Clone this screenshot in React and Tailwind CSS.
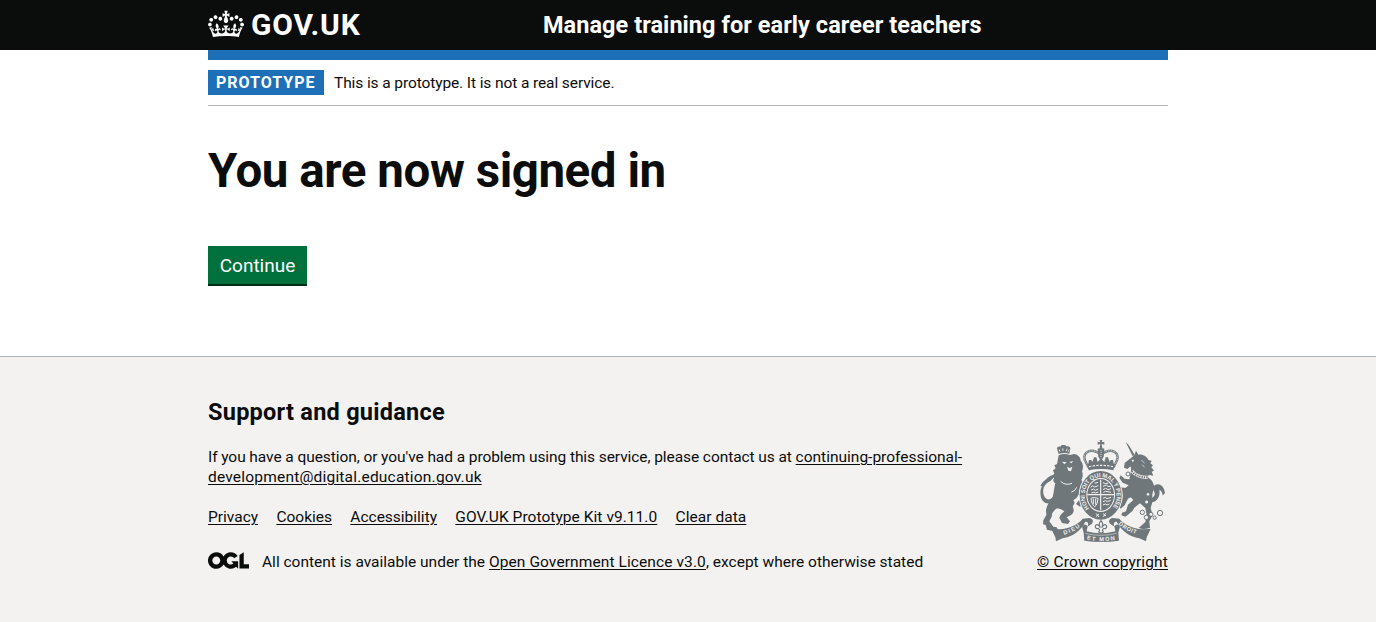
const GREY = "#6f777b";
const PAPER = "#f3f2f1";

function Crown() {
  return (
    <svg className="mb-0.5 h-[30px] w-9 shrink-0 fill-white" viewBox="0 0 132 97" aria-hidden="true">
      <path
        fillRule="evenodd"
        d="M25 30.2c3.5 1.5 7.7-.2 9.1-3.7 1.5-3.6-.2-7.8-3.9-9.2-3.6-1.4-7.6.3-9.1 3.9-1.4 3.5.3 7.5 3.9 9zM9 39.5c3.6 1.5 7.8-.2 9.2-3.7 1.5-3.6-.2-7.8-3.9-9.1-3.6-1.5-7.6.2-9.1 3.8-1.4 3.5.3 7.5 3.8 9zM4.4 57.2c3.5 1.5 7.7-.2 9.1-3.8 1.5-3.6-.2-7.7-3.9-9.1-3.5-1.5-7.6.3-9.1 3.8-1.4 3.5.3 7.6 3.9 9.1zm38.3-21.4c3.5 1.5 7.7-.2 9.1-3.8 1.5-3.6-.2-7.7-3.9-9.1-3.6-1.5-7.6.3-9.1 3.8-1.3 3.6.4 7.7 3.9 9.1zm64.4-5.6c-3.6 1.5-7.8-.2-9.1-3.7-1.5-3.6.2-7.8 3.8-9.2 3.6-1.4 7.7.3 9.2 3.9 1.3 3.5-.4 7.5-3.9 9zm15.9 9.3c-3.6 1.5-7.7-.2-9.1-3.7-1.5-3.6.2-7.8 3.7-9.1 3.6-1.5 7.7.2 9.2 3.8 1.5 3.5-.3 7.5-3.8 9zm4.7 17.7c-3.6 1.5-7.8-.2-9.2-3.8-1.5-3.6.2-7.7 3.9-9.1 3.6-1.5 7.7.3 9.2 3.8 1.3 3.5-.4 7.6-3.9 9.1zM89.3 35.8c-3.6 1.5-7.8-.2-9.2-3.8-1.4-3.6.2-7.7 3.9-9.1 3.6-1.5 7.7.3 9.2 3.8 1.4 3.6-.3 7.7-3.9 9.1zM69.7 17.7l8.9 4.7V9.3l-8.9 2.8c-.2-.3-.5-.6-.9-.9L72.4 0H59.6l3.5 11.2c-.3.3-.6.5-.9.9l-8.8-2.8v13.1l8.8-4.7c.3.3.6.7.9.9l-5 15.4v.1c-.2.8-.4 1.6-.4 2.4 0 4.1 3.1 7.5 7 8.1h.2c.3 0 .7.1 1 .1.4 0 .7 0 1-.1h.2c4-.6 7.1-4.1 7.1-8.1 0-.8-.1-1.7-.4-2.4V34l-5.1-15.4c.4-.2.7-.6 1-.9zM66 92.8c16.9 0 32.8 1.1 47.1 3.2 4-16.9 8.9-26.7 14-33.5l-9.6-3.4c1 4.9 1.1 7.2 0 10.2-1.5-1.4-3-4.3-4.2-8.7L108.6 76c2.8-2 5-3.2 7.5-3.3-4.4 9.4-10 11.9-13.6 11.2-4.3-.8-6.3-4.6-5.6-7.9 1-4.7 5.7-5.9 8-.5 4.3-8.7-3-11.4-7.6-8.8 7.1-7.2 7.9-13.5 2.1-21.1-8 6.1-8.1 12.3-4.5 20.8-4.7-5.4-12.1-2.5-9.5 6.2 3.4-5.2 7.9-2 7.2 3.1-.6 4.3-6.4 7.8-13.5 7.2-10.3-.9-10.9-8-11.2-13.8 2.5-.5 7.1 1.8 11 7.3L80.2 60c-4.1 4.4-8 5.3-12.3 5.4 1.4-4.4 8-11.6 8-11.6H55.5s6.4 7.2 7.9 11.6c-4.2-.1-8-1-12.3-5.4l1.4 16.4c3.9-5.5 8.5-7.7 10.9-7.3-.3 5.8-.9 12.8-11.1 13.8-7.2.6-12.9-2.9-13.5-7.2-.7-5 3.8-8.3 7.1-3.1 2.7-8.7-4.6-11.6-9.4-6.2 3.7-8.5 3.6-14.7-4.6-20.8-5.8 7.6-5 13.9 2.2 21.1-4.7-2.6-11.9.1-7.7 8.8 2.3-5.5 7.1-4.2 8.1.5.7 3.3-1.3 7.1-5.7 7.9-3.5.7-9-1.8-13.5-11.2 2.5.1 4.7 1.3 7.5 3.3l-4.7-15.4c-1.2 4.4-2.7 7.2-4.3 8.7-1.1-3-.9-5.3 0-10.2l-9.5 3.4c5 6.9 9.9 16.7 14 33.5 14.8-2.1 30.8-3.2 47.7-3.2z"
      />
    </svg>
  );
}

function OglLogo() {
  return (
    <svg className="mb-[3px] h-[17px] w-[41px] shrink-0 fill-[#0b0c0c]" viewBox="0 0 483.2 195.7" aria-hidden="true">
      <path d="M421.5 142.8V.1l-50.7 32.3v161.1h112.4v-50.7zm-122.3-9.6A47.12 47.12 0 0 1 221 97.8c0-26 21.1-47.1 47.1-47.1 16.7 0 31.4 8.7 39.7 21.8l42.7-27.2A97.63 97.63 0 0 0 268.1 0c-36.5 0-68.3 20.1-85.1 49.7A98 98 0 0 0 97.8 0C43.9 0 0 43.9 0 97.8s43.9 97.8 97.8 97.8c36.5 0 68.3-20.1 85.1-49.7a97.76 97.76 0 0 0 149.6 25.4l19.4 22.2h3v-87.8h-80l24.3 27.5zM97.8 145c-26 0-47.1-21.1-47.1-47.1s21.1-47.1 47.1-47.1 47.1 21.1 47.1 47.1S123.8 145 97.8 145" />
    </svg>
  );
}

function RoyalArms() {
  return (
    <svg className="h-[102px] w-[125px]" viewBox="30 24 375 306" fill={GREY} aria-hidden="true">
      <defs>
        <path id="garter" d="M178 229 A48 55 0 1 1 246 229" />
        <path id="dieu" d="M102 308 Q136 299 160 277" />
        <path id="etmon" d="M170 322 Q213 333 259 322" />
        <path id="droit" d="M265 277 Q290 299 326 308" />
      </defs>

      {/* lion */}
      <path d="M31 163c3-9 9-15 16-20 7-8 20-16 34-17-8 4-9 9-12 13-4 7-13 11-20 16-8 7-11 18-9 29 2 12 10 20 19 18 11-3 15-16 22-24l5 7c-6 13-14 26-27 29-14 2-25-8-27-23-2-12 0-21 4-29z" />
      <path d="M86 66l-5-16c0-6 6-8 10-6l4-5h10l4 4c6-2 13 1 12 8l-3 14q-16-5-32 1z" />
      <path d="M87 52l3 7m8-10l1 8m12-7l-2 8m8-5l-2 6" stroke={PAPER} strokeWidth="2.5" fill="none" />
      <path d="M86 70q16-7 34-1l12-3c12 2 20 10 20 20 8 8 9 22 4 32 4 10 2 20-2 26l10 14-3 16-10 14-7 2c-2 8-8 12-14 14l4 8-6 12c6 10 3 20-6 26l-12 6 10 12-6 8-18-3-8-16 4-9 11-10c-8-6-16-10-25-8-8 8-14 14-12 22l-8 16 12 16 10 2 4 8-16 3-17-4-4-14-8-2 1-12 9-16-1-14c2-16 12-28 20-40 4-14 4-28 8-42-6-2-8-8-4-14l-6-6 7-8-4-10 8-6-4-9 8-4z" />
      <path d="M138 172l18-6 14 8-4 14-18 4zM138 216l20-26 14 6-8 16-14 12z" />
      <path d="M96 89l14 2-7 6zM118 90l12-3-6 7zM111 104l8 4 8-4-4 14-8-2z" fill={PAPER} />
      <path d="M92 148q14 14 34 6m-2 26q12-2 16-14" fill="none" stroke={PAPER} strokeWidth="3" />

      {/* unicorn */}
      <path d="M287 30l7 7 4 5 16 27-6 4z" />
      <path d="M306 76l7-6 5-14 7 12c14-2 26 6 30 16l10 2-4 8 8 6-5 6 8 10-7 3 5 12-12-2-10 6-44-20-2-12-10 8-10-4 2-14 10-8z" />
      <path d="M306 84l6 1-4 4zM334 84l10 10m-8 4l8 8" fill={PAPER} stroke={PAPER} strokeWidth="2" />
      <path d="M304 112l48 22 12 10c10 14 10 24 4 38-2 12-2 18 0 26l-6 20 6 22-10 18 2 20-20 4-14-4 20-18 4-20-4-22-16-14c-10 8-18 12-22 22l-14 12-8 6-12-4 2-8 12-4 6-20 16-14-8-8-8 4-10 20-12 10-6-8 10-18 2-14-10-14-10-4 2-10 12 4 14 2 10-8-18-8-10-14 4-8 12 10 14 2z" />
      <path d="M361 200c12-4 16-12 11-22-6-12 0-21 12-21 9 0 18 8 21 26l-7 8c0-9-4-15-10-18 3 16-3 34-22 38z" />
      <path d="M305 117q18 20 48 19" fill="none" stroke={PAPER} strokeWidth="10" />
      <path d="M305 117q18 20 48 19" fill="none" stroke={GREY} strokeWidth="6" strokeDasharray="4 3" />
      <g fill={PAPER} stroke={GREY} strokeWidth="3">
        <circle cx="294" cy="126" r="6" />
        <circle cx="354" cy="187" r="5.5" />
        <circle cx="350" cy="210" r="6" />
        <circle cx="337" cy="241" r="6.5" />
        <circle cx="349" cy="256" r="6.5" />
        <circle cx="363" cy="247" r="6" />
        <circle cx="374" cy="257" r="5" />
        <circle cx="390" cy="243" r="8" />
      </g>

      {/* crown */}
      <path d="M209 24h8l-2 7 8-2v9l-8-2 2 12h-8l2-12-8 2v-9l8 2z" />
      <path
        d="M174 104c-2-10-12-16-11-29 1-15 16-21 29-18 10 2 15 6 21 13 6-7 11-11 21-13 13-3 28 3 29 18 1 13-9 19-11 29z"
        fill="none"
        stroke={GREY}
        strokeWidth="7"
      />
      <path
        d="M174 104c-2-10-12-16-11-29 1-15 16-21 29-18 10 2 15 6 21 13 6-7 11-11 21-13 13-3 28 3 29 18 1 13-9 19-11 29z"
        fill="none"
        stroke={PAPER}
        strokeWidth="2.5"
        strokeDasharray="2.5 2.5"
      />
      <path d="M203 50l10-3 10 3-2 24-8 14-8-14z" />
      <path d="M213 54v26" stroke={PAPER} strokeWidth="2.5" strokeDasharray="3 3" />
      <path d="M175 94l2-10h7l3 6 5-14h7l4 14 5-5 5-8 5 8 5 5 4-14h7l5 14 3-6h7l2 10v8h-76z" />
      <path d="M171 97q42-9 84 0l-5 18q-37-8-74 0z" />
      <path d="M177 104q36-8 72 0" fill="none" stroke={PAPER} strokeWidth="3.5" strokeDasharray="7 4" />

      {/* garter and shield */}
      <ellipse cx="212" cy="190" rx="66" ry="76" fill={PAPER} />
      <ellipse cx="212" cy="190" rx="63" ry="73" />
      <ellipse cx="212" cy="189" rx="43" ry="51" fill={PAPER} />
      <ellipse cx="212" cy="189" rx="40" ry="48" />
      <path d="M212 143v92M172 188h80" stroke={PAPER} strokeWidth="3.5" />
      <g fill="none" stroke={PAPER} strokeWidth="3">
        <path d="M182 166l6-5 5 4 12-4m-22 13l8-3 5 4 9-4m-21 12l8-3 4 3 9-3M194 154l10-3" />
        <path d="M219 152l8 3 8-2m-16 10l10-4 5 4 8 1m-23 9l8-4 7 4 9-3m-23 11l7-3 16 3" />
        <path d="M183 199c7-4 13-2 21 0-1 12-3 20-10 25-7-5-10-14-11-25zM190 200v16m7-16v18" />
        <path d="M219 199l7-3 5 4 12-4m-24 13l8-3 5 3 10-4m-23 14l7-3 5 3 7-3" />
      </g>
      <text fill={PAPER} className="font-['Liberation_Sans'] text-[18px] font-bold">
        <textPath href="#garter" textLength="242" lengthAdjust="spacingAndGlyphs">
          HONI SOIT QUI MAL Y PENSE
        </textPath>
      </text>
      <path d="M198 244l9 11m0-9l-9 8m21-9l9 7m-1-8l-7 11" stroke={PAPER} strokeWidth="3" />

      {/* motto ribbon */}
      <path d="M64 291l24 1c30-2 56-14 70-32l20-2c10 2 14 9 8 17l-14 9c5-9 2-16-6-15l-8 14c-16 22-40 34-60 36l-20 9-2-12z" />
      <path d="M362 291l-24 1c-30-2-56-14-70-32l-20-2c-10 2-14 9-8 17l14 9c-5-9-2-16 6-15l8 14c16 22 40 34 60 36l20 9 2-12z" />
      <path d="M161 302l-5-18q8-12 17-1l-3 15q42 12 86 0l-3-15q9-11 17 1l-5 18 2 24q-54 8-104 0z" />
      <path d="M166 304q48 12 94 0" fill="none" stroke={PAPER} strokeWidth="1.5" />
      <path
        d="M213 266c7 7 7 13 2 21 4-9 12-12 15-5 1 6-4 9-9 7l-4 5 3 6-7 4-7-4 3-6-4-5c-5 2-10-1-9-7 3-7 11-4 15 5-5-8-5-14 2-21z"
        fill={PAPER}
        stroke={GREY}
        strokeWidth="3.5"
      />
      <g fill={PAPER} className="font-['Liberation_Sans'] text-[17px] font-bold">
        <text>
          <textPath href="#dieu" textLength="54">
            DIEU
          </textPath>
        </text>
        <text>
          <textPath href="#etmon" textLength="86">
            ET MON
          </textPath>
        </text>
        <text>
          <textPath href="#droit" textLength="60">
            DROIT
          </textPath>
        </text>
      </g>
    </svg>
  );
}

function FooterLink({ children, className = "" }) {
  return (
    <a href="#" className={`underline decoration-1 underline-offset-2 ${className}`}>
      {children}
    </a>
  );
}

export default function App() {
  return (
    <div className="flex min-h-screen flex-col bg-white font-['Roboto','Liberation_Sans',sans-serif] text-[15.5px] leading-5 text-[#0b0c0c]">
      <header className="h-[50px] bg-[#0b0c0c] text-white">
        <div className="mx-auto flex h-full w-[960px] items-center">
          <a href="#" className="flex w-[335px] items-center gap-[7px]">
            <Crown />
            <span className="text-[30px] leading-[30px] font-bold tracking-[0.8px]">GOV.UK</span>
          </a>
          <a href="#" className="text-[23.5px] leading-[30px] font-bold tracking-[0.05px]">
            Manage training for early career teachers
          </a>
        </div>
      </header>

      <div className="mx-auto w-[960px]">
        <div className="h-2.5 bg-[#1d70b8]" />
        <div className="flex h-[46px] items-center gap-2.5 border-b border-[#b1b4b6]">
          <strong className="h-[25px] w-[116px] bg-[#1d70b8] pl-2 text-base leading-[25px] font-bold tracking-[1px] text-white">
            PROTOTYPE
          </strong>
          <span className="tracking-[-0.1px]">This is a prototype. It is not a real service.</span>
        </div>
        <main className="flex h-[250px] flex-col items-start pt-10">
          <h1 className="text-[47.5px] leading-[50px] font-bold tracking-[-0.45px]">You are now signed in</h1>
          <button className="mt-[50px] h-[38px] w-[99px] bg-[#00703c] text-[19px] leading-[40px] text-white shadow-[0_2px_0_#002d18]">
            Continue
          </button>
        </main>
      </div>

      <footer className="flex-1 border-t border-[#b1b4b6] bg-[#f3f2f1] pt-10">
        <div className="mx-auto flex w-[960px] items-end justify-between">
          <div>
            <h2 className="text-[23.5px] leading-[30px] font-bold tracking-[0.25px]">Support and guidance</h2>
            <p className="mt-5 whitespace-nowrap">
              <span className="tracking-[-0.075px]">
                If you have a question, or you&apos;ve had a problem using this service, please contact us at{" "}
              </span>
              <FooterLink>continuing-professional-</FooterLink>
              <br />
              <FooterLink className="tracking-[0.2px]">development@digital.education.gov.uk</FooterLink>
            </p>
            <nav className="mt-5 flex gap-[18.3px]">
              <FooterLink>Privacy</FooterLink>
              <FooterLink>Cookies</FooterLink>
              <FooterLink>Accessibility</FooterLink>
              <FooterLink className="tracking-[0.05px]">GOV.UK Prototype Kit v9.11.0</FooterLink>
              <FooterLink className="tracking-[0.05px]">Clear data</FooterLink>
            </nav>
            <div className="mt-[25px] flex h-5 items-center gap-[13px]">
              <OglLogo />
              <span className="whitespace-nowrap">
                All content is available under the{" "}
                <FooterLink className="tracking-[0.1px]">Open Government Licence v3.0</FooterLink>, except where
                otherwise stated
              </span>
            </div>
          </div>
          <a href="#" className="flex flex-col items-center gap-2.5">
            <RoyalArms />
            <span className="tracking-[0.15px] underline decoration-1 underline-offset-2">© Crown copyright</span>
          </a>
        </div>
      </footer>
    </div>
  );
}
